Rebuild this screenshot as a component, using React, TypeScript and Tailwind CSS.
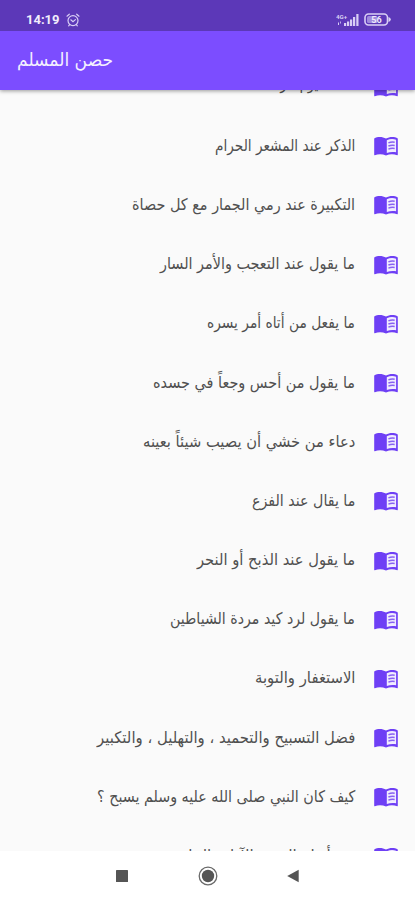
import { useLayoutEffect, useRef, useState } from 'react';

type Item = { title: string; width: number };

const items: Item[] = [
  { title: 'الدعاء يوم عرفة', width: 88 },
  { title: 'الذكر عند المشعر الحرام', width: 140 },
  { title: 'التكبيرة عند رمي الجمار مع كل حصاة', width: 223 },
  { title: 'ما يقول عند التعجب والأمر السار', width: 195 },
  { title: 'ما يفعل من أتاه أمر يسره', width: 148 },
  { title: 'ما يقول من أحس وجعاً في جسده', width: 202 },
  { title: 'دعاء من خشي أن يصيب شيئاً بعينه', width: 212 },
  { title: 'ما يقال عند الفزع', width: 103 },
  { title: 'ما يقول عند الذبح أو النحر', width: 158 },
  { title: 'ما يقول لرد كيد مردة الشياطين', width: 185 },
  { title: 'الاستغفار والتوبة', width: 100 },
  { title: 'فضل التسبيح والتحميد ، والتهليل ، والتكبير', width: 258 },
  { title: 'كيف كان النبي صلى الله عليه وسلم يسبح ؟', width: 258 },
  { title: 'من أنواع الخير والآداب الجامعة', width: 190 },
];

function FitText({ text, width, className }: { text: string; width: number; className: string }) {
  const ref = useRef<HTMLSpanElement>(null);
  const [scale, setScale] = useState(1);
  useLayoutEffect(() => {
    if (ref.current) setScale(width / ref.current.offsetWidth);
  }, [width]);
  return (
    <span
      ref={ref}
      className={`inline-block shrink-0 whitespace-nowrap ${className}`}
      style={{ transform: `scaleX(${scale})` }}
    >
      {text}
    </span>
  );
}

function BookIcon() {
  return (
    <svg viewBox="0 0 26 24" className="h-6 w-[26px] shrink-0">
      <path
        fill="#6e3ff5"
        d="M1.2 4.4C4.5 2.4 9.5 2.4 13 4.6c3.5-2.2 8.5-2.2 11.8-.2V20.8q0 .5-.6.4c-3.6-1.5-7.8-1.3-11.2.3-3.4-1.6-7.6-1.8-11.2-.3q-.6.1-.6-.4z"
      />
      <path d="M13.8 6.300c2.700-1.400 6.200-1.600 9.300-.6v12.600c-3.100-.7-6.500-.4-9.300.7z" fill="#f1ecff" />
      <path d="M15.4 8.900q3-1.200 6.300-.6M15.400 12q3-1.200 6.300-.6M15.400 15.100q3-1.200 6.300-.6" fill="none" stroke="#8761f2" strokeWidth="1.5" />
    </svg>
  );
}

function AlarmIcon() {
  return (
    <svg viewBox="0 0 14 14" className="ml-[6px] h-[14px] w-[14px] fill-none stroke-[#d9cff5]" strokeWidth="1.2" strokeLinecap="round">
      <circle cx="7" cy="7.6" r="5" />
      <path d="M1 3.2 3.3 1.2M13 3.2 10.7 1.2M4.8 6.8 7 8.6l2.4-2M3.6 11.6l-.9 1.2M10.4 11.6l.9 1.2" />
    </svg>
  );
}

function SignalIcon() {
  return (
    <svg viewBox="0 0 24 14" className="h-[14px] w-6 fill-[#d9cff5]">
      <text x="0" y="5.5" fontSize="6" fontWeight="700" fontFamily="Roboto, sans-serif" textLength="11" lengthAdjust="spacingAndGlyphs">4G+</text>
      <path d="M2 9.500h1v2.500H2zM4 8.500h.8v2H4zM8 10h2.200v3H8zM11 8.500h2.200V13H11zM14 6.500h2.200V13H14zM17 4h2.200v9H17zM20.300 1h2.200v12h-2.200z" />
    </svg>
  );
}

function BatteryIcon() {
  return (
    <svg viewBox="0 0 27 13" className="ml-1 h-[13px] w-[27px]">
      <rect x="1" y="1" width="22.5" height="11" rx="3.5" fill="none" stroke="#d9cff5" strokeWidth="1.6" />
      <path d="M24.500 4q2.300.8 2.300 2.500t-2.300 2.500z" fill="#d9cff5" />
      <path d="M4.500 3H13v7H4.500Q3 10 3 8.500v-4Q3 3 4.500 3z" fill="#a08bdd" />
      <text x="12.5" y="9.8" textAnchor="middle" fontSize="9" fontWeight="700" fontFamily="Roboto, sans-serif" fill="#efeafb">56</text>
    </svg>
  );
}

export default function App() {
  return (
    <div className="flex h-[900px] w-[415px] flex-col overflow-hidden bg-[#fafafa] font-['DejaVu_Sans',sans-serif]">
      <header className="z-10 shrink-0 shadow-[0_1px_4px_rgba(0,0,0,0.4)]">
        <div className="flex h-[31px] items-center bg-[#5c38b8] pl-[26px] pr-[24px] pt-[8px]">
          <span className="font-['Roboto',sans-serif] text-[13px] font-bold leading-none text-[#f2eefc]">14:19</span>
          <AlarmIcon />
          <div className="ml-auto flex items-center">
            <SignalIcon />
            <BatteryIcon />
          </div>
        </div>
        <div className="flex h-[59px] items-center bg-[#7c4dff] pb-[2px] pl-[17px]">
          <FitText text="حصن المسلم" width={96} className="origin-left text-[18px] text-[#f4f0ff]" />
        </div>
      </header>

      <main className="min-h-0 flex-1 overflow-hidden">
        <ul dir="rtl" className="-mt-[32.5px]">
          {items.map((item, index) => (
            <li key={item.title} className="flex h-[59.2px] items-center gap-[18px] pr-[16px]">
              <BookIcon />
              <FitText
                text={item.title}
                width={item.width}
                className={`origin-right text-[16px] text-[#505050] ${index === 0 ? 'pb-[6px]' : 'pb-px'}`}
              />
            </li>
          ))}
        </ul>
      </main>

      <nav className="flex h-[49px] shrink-0 items-center bg-white pl-[115px]">
        <svg viewBox="0 0 14 14" className="h-[14px] w-[14px] fill-[#555555]">
          <rect x="1" y="1" width="12" height="12" rx="0.6" />
        </svg>
        <svg viewBox="0 0 20 20" className="ml-[69px] h-5 w-5">
          <circle cx="10" cy="10" r="8.8" fill="none" stroke="#6a6a6a" strokeWidth="1.3" />
          <circle cx="10" cy="10" r="6.2" fill="#555555" />
        </svg>
        <svg viewBox="0 0 14 14" className="ml-[68px] h-[14px] w-[14px] fill-[#555555]">
          <path d="M12.7.8v12.4L1.2 7z" />
        </svg>
      </nav>
    </div>
  );
}
